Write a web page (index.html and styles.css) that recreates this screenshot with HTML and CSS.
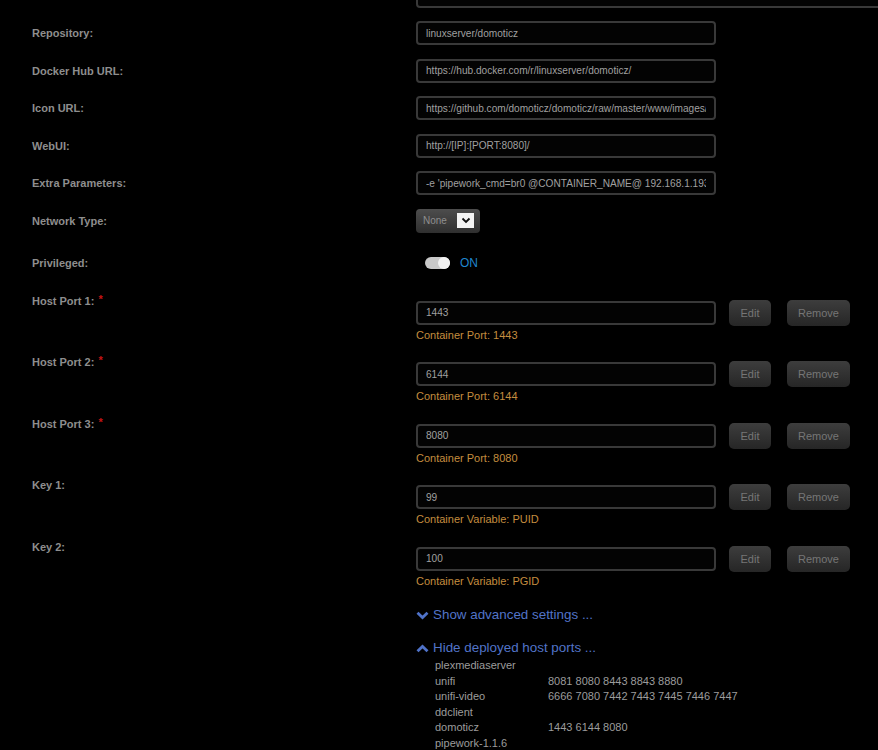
FILE: index.html
```html
<!DOCTYPE html>
<html lang="en">

<head>
    <meta charset="UTF-8">
    <meta name="viewport" content="width=device-width, initial-scale=1.0">
    <title>Add Container - domoticz</title>
    <link rel="stylesheet" href="styles.css">
</head>

<body>
    <div class="form">
        <div class="row">
            <div class="label"></div>
            <div class="value"><textarea class="overview"></textarea></div>
        </div>

        <div class="row">
            <div class="label">Repository:</div>
            <div class="value"><input class="field" type="text" value="linuxserver/domoticz"></div>
        </div>
        <div class="row">
            <div class="label">Docker Hub URL:</div>
            <div class="value"><input class="field" type="text" value="https://hub.docker.com/r/linuxserver/domoticz/"></div>
        </div>
        <div class="row">
            <div class="label">Icon URL:</div>
            <div class="value"><input class="field" type="text" value="https://github.com/domoticz/domoticz/raw/master/www/images/logo.png"></div>
        </div>
        <div class="row">
            <div class="label">WebUI:</div>
            <div class="value"><input class="field" type="text" value="http://[IP]:[PORT:8080]/"></div>
        </div>
        <div class="row">
            <div class="label">Extra Parameters:</div>
            <div class="value"><input class="field" type="text" value="-e 'pipework_cmd=br0 @CONTAINER_NAME@ 192.168.1.193/24'"></div>
        </div>
        <div class="row">
            <div class="label">Network Type:</div>
            <div class="value">
                <div class="select">
                    <span>None</span>
                    <span class="select-arrow">
                        <svg width="10" height="7" viewBox="0 0 10 7"><path d="M1.5 1.5 L5 5 L8.5 1.5" fill="none" stroke="#111" stroke-width="1.8"/></svg>
                    </span>
                </div>
            </div>
        </div>
        <div class="row row-switch">
            <div class="label">Privileged:</div>
            <div class="value">
                <div class="switch"><span class="knob"></span></div>
                <span class="switch-text">ON</span>
            </div>
        </div>

        <div class="row row-port">
            <div class="label">Host Port 1: <span class="req">*</span></div>
            <div class="value">
                <div class="port-line">
                    <input class="field" type="text" value="1443">
                    <button class="btn btn-edit">Edit</button>
                    <button class="btn btn-remove">Remove</button>
                </div>
                <div class="hint">Container Port: 1443</div>
            </div>
        </div>
        <div class="row row-port">
            <div class="label">Host Port 2: <span class="req">*</span></div>
            <div class="value">
                <div class="port-line">
                    <input class="field" type="text" value="6144">
                    <button class="btn btn-edit">Edit</button>
                    <button class="btn btn-remove">Remove</button>
                </div>
                <div class="hint">Container Port: 6144</div>
            </div>
        </div>
        <div class="row row-port">
            <div class="label">Host Port 3: <span class="req">*</span></div>
            <div class="value">
                <div class="port-line">
                    <input class="field" type="text" value="8080">
                    <button class="btn btn-edit">Edit</button>
                    <button class="btn btn-remove">Remove</button>
                </div>
                <div class="hint">Container Port: 8080</div>
            </div>
        </div>
        <div class="row row-port">
            <div class="label">Key 1:</div>
            <div class="value">
                <div class="port-line">
                    <input class="field" type="text" value="99">
                    <button class="btn btn-edit">Edit</button>
                    <button class="btn btn-remove">Remove</button>
                </div>
                <div class="hint">Container Variable: PUID</div>
            </div>
        </div>
        <div class="row row-port">
            <div class="label">Key 2:</div>
            <div class="value">
                <div class="port-line">
                    <input class="field" type="text" value="100">
                    <button class="btn btn-edit">Edit</button>
                    <button class="btn btn-remove">Remove</button>
                </div>
                <div class="hint">Container Variable: PGID</div>
            </div>
        </div>

        <div class="row row-more">
            <div class="label"></div>
            <div class="value">
                <div class="toggle-link">
                    <svg class="chev" width="13" height="9" viewBox="0 0 13 9"><path d="M1.5 1.8 L6.5 6.6 L11.5 1.8" fill="none" stroke="#4f72c8" stroke-width="2.8"/></svg>
                    Show advanced settings ...
                </div>
                <div class="toggle-link toggle-hide">
                    <svg class="chev" width="13" height="9" viewBox="0 0 13 9"><path d="M1.5 7.2 L6.5 2.4 L11.5 7.2" fill="none" stroke="#4f72c8" stroke-width="2.8"/></svg>
                    Hide deployed host ports ...
                </div>
                <div class="ports">
                    <div class="port-row"><span class="pname">plexmediaserver</span><span></span></div>
                    <div class="port-row"><span class="pname">unifi</span><span>8081 8080 8443 8843 8880</span></div>
                    <div class="port-row"><span class="pname">unifi-video</span><span>6666 7080 7442 7443 7445 7446 7447</span></div>
                    <div class="port-row"><span class="pname">ddclient</span><span></span></div>
                    <div class="port-row"><span class="pname">domoticz</span><span>1443 6144 8080</span></div>
                    <div class="port-row"><span class="pname">pipework-1.1.6</span><span></span></div>
                </div>
            </div>
        </div>
    </div>
</body>

</html>
```

FILE: styles.css
```css
* {
    box-sizing: border-box;
}

body {
    margin: 0;
    background-color: #000;
    overflow: hidden;
    font-family: 'Liberation Sans', Arial, sans-serif;
}

.form {
    padding-left: 32px;
}

.row {
    display: grid;
    grid-template-columns: 384px 1fr;
    align-items: center;
    margin-bottom: 13.5px;
}

.label {
    font-size: 11px;
    font-weight: bold;
    line-height: 14px;
    color: #8e8e8e;
}

.req {
    color: #c41414;
    position: relative;
    top: -2px;
    left: 1px;
}

.overview {
    display: block;
    width: 490px;
    height: 40px;
    margin-top: -32.5px;
    background-color: #030303;
    border: 2px solid #393939;
    border-radius: 4px;
    resize: none;
}

.field {
    display: block;
    width: 300px;
    height: 24px;
    padding: 0 8px;
    background-color: #030303;
    border: 2px solid #393939;
    border-radius: 4px;
    color: #a0a0a0;
    font-family: 'Liberation Sans', Arial, sans-serif;
    font-size: 10.1px;
    outline: none;
}

/* network select */
.select {
    display: flex;
    align-items: center;
    justify-content: space-between;
    width: 64px;
    height: 24px;
    padding: 0 6px 0 7px;
    border-radius: 4px;
    background: linear-gradient(#4d4d4d, #2f2f2f);
    box-shadow: 0 1px 2px #000;
    color: #8e8e8e;
    font-size: 10px;
}

.select-arrow {
    display: flex;
    align-items: center;
    justify-content: center;
    width: 17px;
    height: 15px;
    background-color: #f4f4f4;
}

/* privileged switch */
.row-switch {
    height: 34px;
}

.row-switch .value {
    display: flex;
    align-items: center;
    padding-left: 9px;
}

.switch {
    display: flex;
    justify-content: flex-end;
    width: 25px;
    height: 12px;
    border-radius: 6px;
    background-color: #c9c9c9;
}

.knob {
    width: 12px;
    height: 12px;
    border-radius: 6px;
    background-color: #f2f2f2;
}

.switch-text {
    margin-left: 10px;
    font-size: 12px;
    color: #1f86cf;
}

/* ports and variables */
.row-port {
    align-items: start;
}

.row-port .value {
    padding-top: 6px;
}

.port-line {
    display: flex;
    align-items: center;
}

.btn {
    height: 26px;
    border: none;
    border-radius: 5px;
    background: linear-gradient(#3d3d3d, #262626);
    color: #767676;
    font-family: 'Liberation Sans', Arial, sans-serif;
    font-size: 11px;
    cursor: pointer;
}

.btn-edit {
    width: 42px;
    margin-left: 13px;
}

.btn-remove {
    width: 63px;
    margin-left: 16px;
}

.hint {
    margin-top: 2px;
    font-size: 11px;
    line-height: 14px;
    color: #c48d3f;
}

/* bottom links */
.row-more {
    align-items: start;
    margin-top: 18.5px;
}

.toggle-link {
    display: flex;
    align-items: center;
    font-size: 13.4px;
    line-height: 18px;
    color: #5274c8;
    cursor: pointer;
}

.chev {
    margin-right: 4px;
}

.toggle-hide {
    margin-top: 15px;
}

.ports {
    margin-top: 1px;
    padding-left: 19px;
    font-size: 11px;
    line-height: 15.6px;
    color: #9c9c9c;
}

.port-row {
    display: grid;
    grid-template-columns: 113px 1fr;
}
```
